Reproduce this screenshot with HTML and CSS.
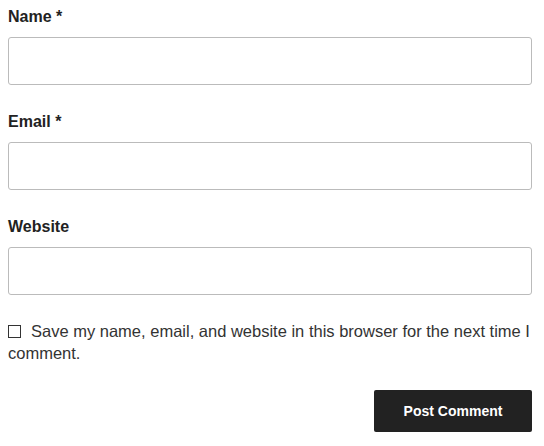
FILE: index.html
```html
<!DOCTYPE html>
<html>
<head>
<meta charset="utf-8">
<link rel="stylesheet" href="styles.css">
</head>
<body>
<form class="comment-form">
  <div class="field">
    <label class="field-label" for="name">Name *</label>
    <input class="field-input" id="name" type="text">
  </div>
  <div class="field">
    <label class="field-label" for="email">Email *</label>
    <input class="field-input" id="email" type="text">
  </div>
  <div class="field">
    <label class="field-label" for="url">Website</label>
    <input class="field-input" id="url" type="text">
  </div>
  <p class="consent">
    <span class="box"></span>Save my name, email, and website in this browser for the next time I comment.
  </p>
  <div class="submit-row">
    <button class="submit" type="button">Post Comment</button>
  </div>
</form>
</body>
</html>
```
FILE: styles.css
```css
html, body {
  margin: 0;
  padding: 0;
  background: #fff;
}
body {
  font-family: "Liberation Sans", Arial, sans-serif;
  color: #333;
}
.comment-form {
  padding: 5px 12px 0 8px;
}
.field {
  margin-bottom: 25px;
}
.field-label {
  display: block;
  font-size: 16px;
  font-weight: 700;
  line-height: 24px;
  color: #222;
  margin-bottom: 8px;
}
.field-input {
  display: block;
  box-sizing: border-box;
  width: 100%;
  height: 48px;
  border: 1px solid #bbb;
  border-radius: 3px;
  background: #fff;
  margin: 0;
}
.consent {
  margin: 0;
  font-size: 16.5px;
  line-height: 22px;
  color: #333;
  padding-top: 0;
}
.box {
  display: inline-block;
  width: 11px;
  height: 11px;
  border: 1px solid #333;
  margin-right: 10px;
  vertical-align: -1px;
}
.submit-row {
  display: flex;
  justify-content: flex-end;
  margin-top: 26px;
}
.submit {
  width: 158px;
  height: 42px;
  background: #222;
  color: #fff;
  border: none;
  border-radius: 2px;
  font-family: "Liberation Sans", Arial, sans-serif;
  font-size: 14px;
  font-weight: 700;
}
```
